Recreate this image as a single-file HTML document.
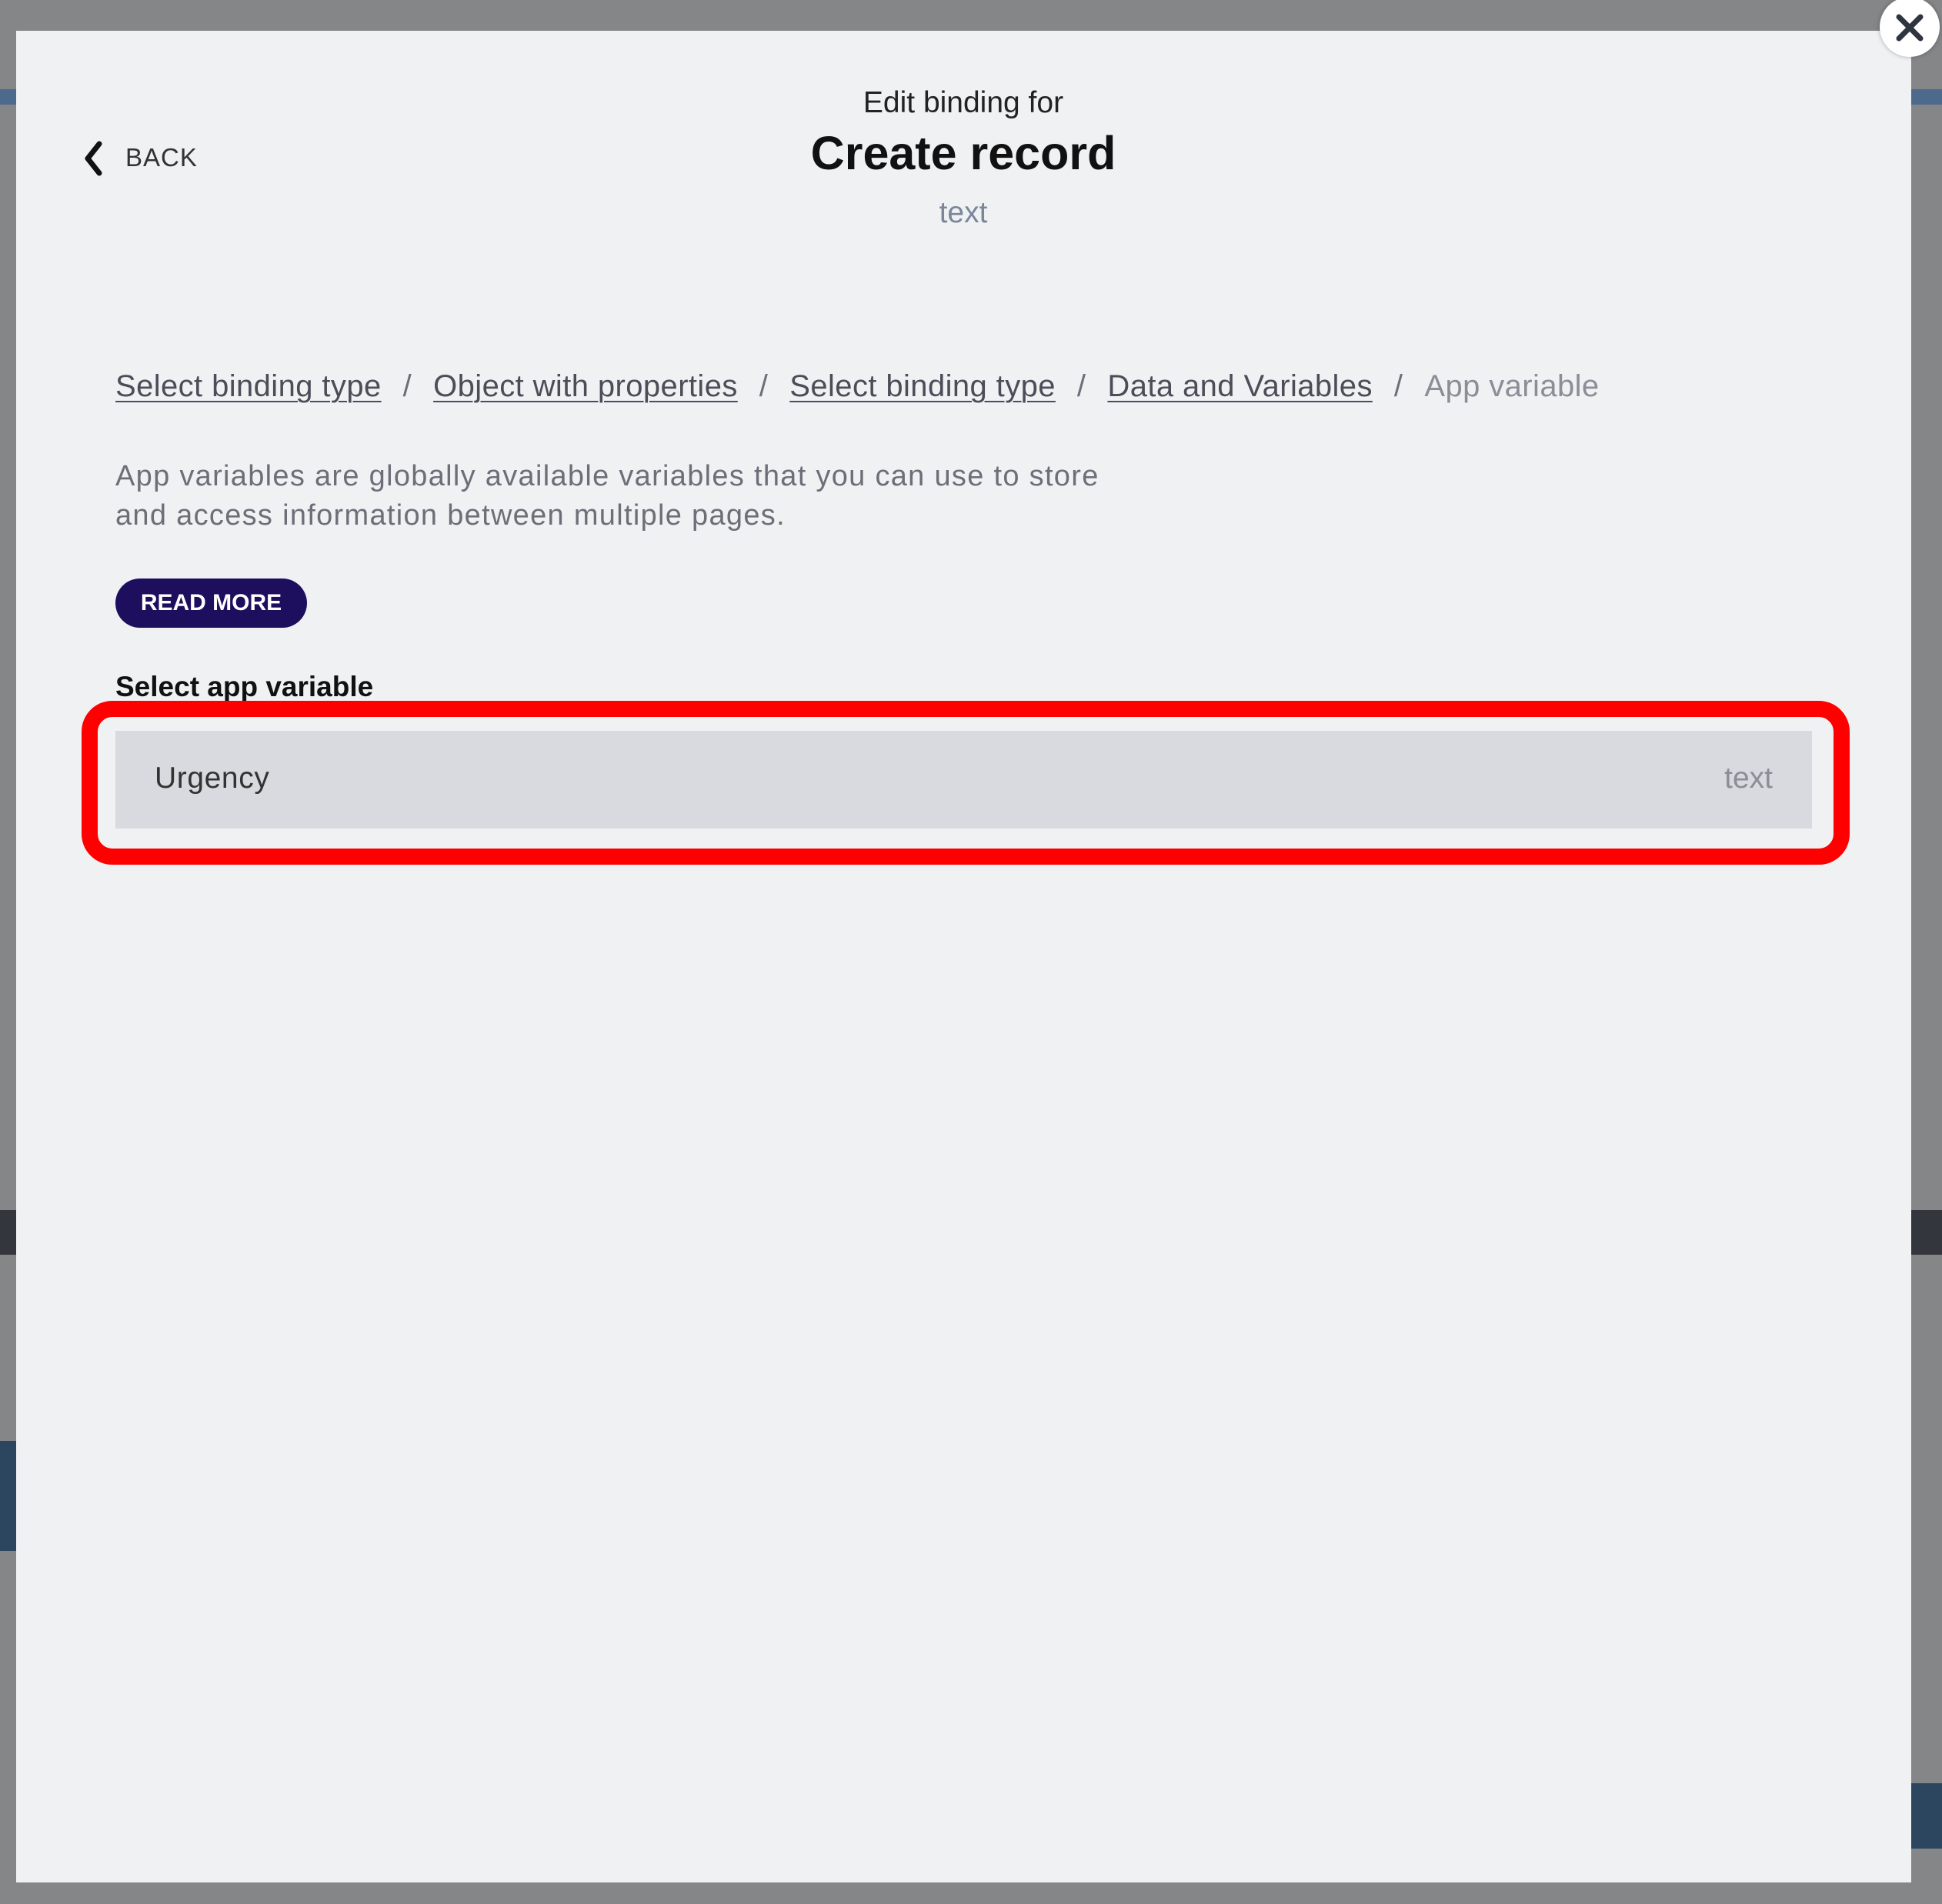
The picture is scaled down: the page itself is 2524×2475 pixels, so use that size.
<!DOCTYPE html>
<html><head><meta charset="utf-8"><style>
*{margin:0;padding:0;box-sizing:border-box}
body{width:2524px;height:2475px;background:#858688;position:relative;overflow:hidden;font-family:"Liberation Sans",sans-serif}
.modal{position:absolute;left:21px;top:40px;width:2463px;height:2407px;background:#f0f1f3}
.t{position:absolute;white-space:nowrap}
.bc a{color:#4a4e58;text-decoration:underline;text-decoration-thickness:2px;text-underline-offset:6px}
.bc span{color:#6b6f78;margin:0 28px}
</style></head><body>
<div style="position:absolute;left:2484px;top:116px;width:40px;height:20px;background:#4d6a8c"></div>
<div style="position:absolute;left:2484px;top:1573px;width:40px;height:58px;background:#33363d"></div>
<div style="position:absolute;left:2484px;top:2318px;width:40px;height:85px;background:#2d4660"></div>
<div style="position:absolute;left:0;top:116px;width:21px;height:20px;background:#4d6a8c"></div>
<div style="position:absolute;left:0;top:1573px;width:21px;height:58px;background:#33363d"></div>
<div style="position:absolute;left:0;top:1873px;width:21px;height:143px;background:#2d4660"></div>
<div class="modal"></div>
<div style="position:absolute;left:2443px;top:-4px;width:78px;height:78px;border-radius:50%;background:#fff;box-shadow:0 0 6px rgba(0,0,0,.3)"></div>
<svg style="position:absolute;left:2460px;top:14px" width="44" height="44" viewBox="0 0 44 44"><path d="M8 8L36 36M36 8L8 36" stroke="#2e3440" stroke-width="7" stroke-linecap="round"/></svg>
<svg style="position:absolute;left:105px;top:182px" width="32" height="48" viewBox="0 0 32 48"><path d="M24 5L9 24L24 43" stroke="#111" stroke-width="7" fill="none" stroke-linecap="round" stroke-linejoin="round"/></svg>
<div class="t" style="left:163px;top:186px;font-size:33px;color:#333;letter-spacing:1px">BACK</div>
<div class="t" style="left:0;width:2504px;text-align:center;top:112px;font-size:39px;color:#222">Edit binding for</div>
<div class="t" style="left:0;width:2504px;text-align:center;top:164px;font-size:61px;color:#111;font-weight:bold">Create record</div>
<div class="t" style="left:0;width:2504px;text-align:center;top:255px;font-size:39px;color:#7a869a">text</div>
<div class="t bc" style="left:150px;top:480px;font-size:40px;letter-spacing:0.4px"><a>Select binding type</a><span>/</span><a>Object with properties</a><span>/</span><a>Select binding type</a><span>/</span><a>Data and Variables</a><span>/</span><span style="margin:0;color:#8a8e96">App variable</span></div>
<div class="t" style="left:150px;top:594px;font-size:38px;line-height:51px;color:#6b6f78;letter-spacing:1.3px">App variables are globally available variables that you can use to store<br>and access information between multiple pages.</div>
<div class="t" style="left:150px;top:752px;width:249px;height:64px;border-radius:32px;background:#1d0f5e;color:#fff;font-weight:bold;font-size:30px;text-align:center;line-height:64px">READ MORE</div>
<div class="t" style="left:150px;top:872px;font-size:37px;font-weight:bold;color:#111">Select app variable</div>
<div style="position:absolute;left:150px;top:950px;width:2205px;height:127px;background:#d9dadf"></div>
<div class="t" style="left:201px;top:990px;font-size:39px;color:#333;letter-spacing:0.6px">Urgency</div>
<div class="t" style="left:2200px;width:104px;text-align:right;top:990px;font-size:39px;color:#8a8e96">text</div>
<div style="position:absolute;left:106px;top:911px;width:2298px;height:213px;border:21px solid #ff0000;border-radius:40px"></div>
</body></html>
